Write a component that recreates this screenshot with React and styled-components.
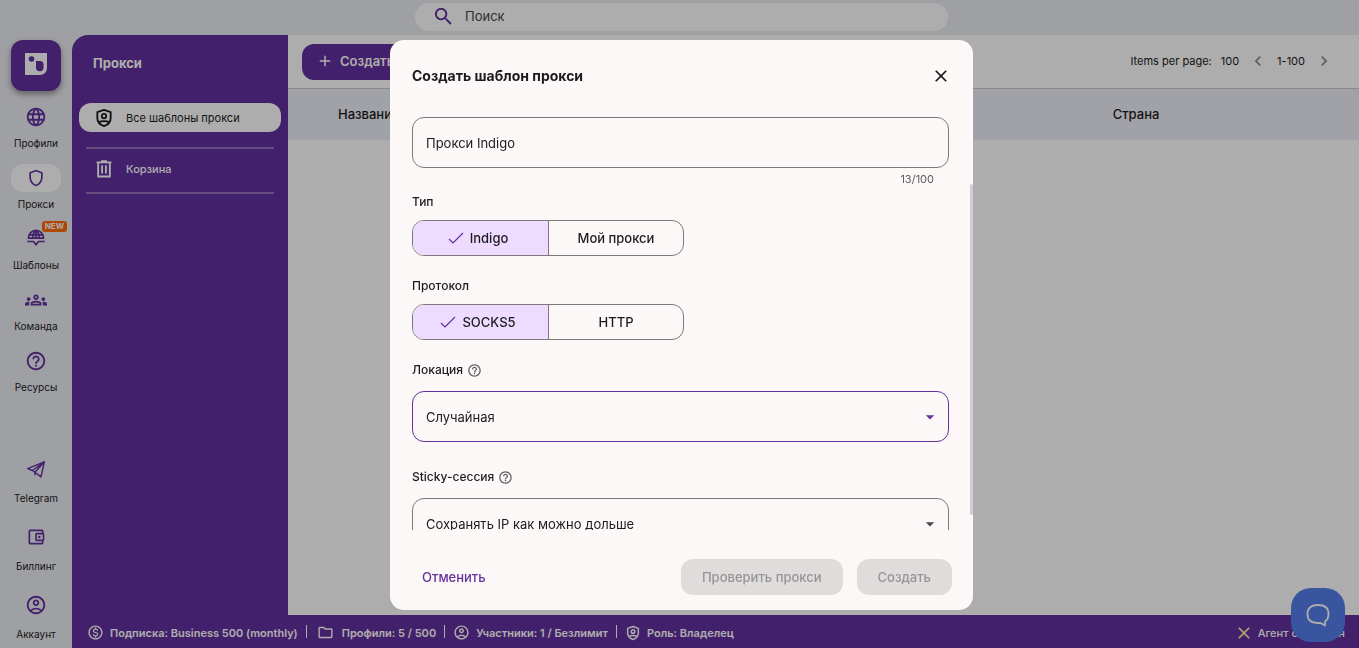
import React, { useState } from 'react';
import styled, { createGlobalStyle, css } from 'styled-components';
import {
  MdAdd,
  MdArrowDropDown,
  MdChevronLeft,
  MdChevronRight,
  MdClose,
  MdHelpOutline,
  MdLanguage,
  MdOutlineAccountBalanceWallet,
  MdOutlineAccountCircle,
  MdOutlineFolder,
  MdOutlineGroups,
  MdOutlineMonetizationOn,
  MdOutlineShield,
  MdSearch,
} from 'react-icons/md';

const purple = '#64309e';

const GlobalStyle = createGlobalStyle`
  * {
    box-sizing: border-box;
  }

  body {
    margin: 0;
    font-family: Inter, "Liberation Sans", sans-serif;
    font-size: 13px;
    color: #1c1b1d;
    background: #ebecf2;
  }

  button, input, select {
    font-family: inherit;
  }
`;

/* icons missing from the material set */

const ShieldPersonIcon = ({ size = 20 }) => (
  <svg width={size} height={size} viewBox="0 0 24 24" fill="none" stroke="currentColor" strokeWidth="2.200">
    <path d="M12 2.200 4 5V12c0 4.600 3.300 8.200 8 9.700 4.700-1.500 8-5.100 8-9.700V5z" strokeLinejoin="round" />
    <circle cx="12" cy="9.700" r="2.700" />
    <path d="M6 17c3-1.600 9-1.600 12 0" />
  </svg>
);

const TrashIcon = ({ size = 20 }) => (
  <svg width={size} height={size} viewBox="0 0 24 24" fill="none" stroke="currentColor" strokeWidth="2.200">
    <path d="M3 4h18M8.500 2.500h7" />
    <path d="M5 4.500v16.500h14V4.500M9.700 7.500v10M14.300 7.500v10" />
  </svg>
);

const UmbrellaGlobeIcon = ({ size = 20 }) => (
  <svg width={size} height={size} viewBox="0 3 24 24" fill="none" stroke="currentColor" strokeWidth="2">
    <path d="M3 14a9 9.500 0 0 1 18 0zM3.500 10h17M8 14c0-4 1.500-7.500 4-9.500 2.500 2 4 5.500 4 9.500M12 4.500V14" />
    <path d="M1.500 18h7.500l3 4 3-4h7.500" strokeLinejoin="round" />
  </svg>
);

const PlaneIcon = ({ size = 20 }) => (
  <svg width={size} height={size} viewBox="0 0 24 24" fill="none" stroke="currentColor" strokeWidth="1.700" strokeLinejoin="round">
    <path d="M22 3.500 2 11.500l5.700 2.300L18 21.500z" />
    <path d="M22 3.500 7.700 13.800M22 3.500 11 15.500l-.5 4" />
  </svg>
);

const CheckIcon = () => (
  <svg width="16" height="14" viewBox="0 0 16 14" fill="none" stroke={purple} strokeWidth="1.200">
    <path d="M1 8l4 4L15 2" />
  </svg>
);

const LogoMark = () => (
  <svg width="22" height="22" viewBox="0 0 22 22">
    <path d="M0 0h22v15a7 7 0 0 1-7 7H0z" fill="#fff" />
    <circle cx="6.500" cy="6" r="2.800" fill={purple} />
    <path d="M11 8h4a3.500 3.500 0 0 1 3.500 3.500v3a3.700 3.700 0 0 1-7.500 0z" fill={purple} />
  </svg>
);

const ChatIcon = () => (
  <svg width="26" height="26" viewBox="0 0 26 26" fill="none" stroke="#fff" strokeWidth="1.800" strokeLinejoin="round">
    <path d="M13 3c7 0 10.500 3 10.500 9 0 3.500-1 6-3.500 7.500v4L15.500 21H13c-7 0-10.500-3-10.500-9S6 3 13 3z" />
  </svg>
);

const Page = styled.div`
  display: grid;
  grid-template-rows: 35px minmax(0, 1fr) 33px;
  grid-template-columns: 72px 216px minmax(0, 1fr);
  height: 100vh;
  background: #ebecf2;
`;

const TopBar = styled.header`
  grid-column: 2 / -1;
  display: flex;
  justify-content: center;
  align-items: center;
  padding-right: 68px;
  padding-bottom: 1px;
`;

const SearchBox = styled.label`
  display: flex;
  align-items: center;
  gap: 8px;
  width: 533px;
  height: 28px;
  padding: 0 17px 2px;
  border-radius: 14px;
  background: #fff;
  color: ${purple};
`;

const SearchInput = styled.input`
  flex: 1;
  border: 0;
  outline: 0;
  background: none;
  font-size: 13px;

  &::placeholder {
    color: #49454e;
    opacity: 1;
  }
`;

const NavRail = styled.nav`
  grid-column: 1;
  grid-row: 1 / -1;
  display: flex;
  flex-direction: column;
  align-items: center;
  padding: 40px 0 6px;
`;

const Logo = styled.a`
  display: flex;
  justify-content: center;
  align-items: center;
  width: 50px;
  height: 51px;
  padding-bottom: 3px;
  margin-bottom: 12px;
  border-radius: 12px;
  background: ${purple};
  box-shadow: 0 3px 6px rgba(0, 0, 0, .4);
`;

const NavGroup = styled.div`
  display: flex;
  flex-direction: column;
  gap: ${props => (props.$bottom ? 17 : 13)}px;
  margin-top: ${props => (props.$bottom ? 'auto' : 0)};
`;

const NavLink = styled.a`
  display: flex;
  flex-direction: column;
  align-items: center;
  gap: ${props => (props.$loose ? 7 : 4)}px;
  color: #1c1b1d;
  font-size: 10px;
  line-height: 16px;
  text-decoration: none;
`;

const NavIcon = styled.span`
  position: relative;
  display: flex;
  justify-content: center;
  align-items: center;
  width: 50px;
  height: 28px;
  border-radius: 12px;
  color: ${purple};
  background: ${props => (props.$active ? '#fff' : 'none')};
`;

const NewBadge = styled.span`
  position: absolute;
  top: -4px;
  right: -6px;
  padding: 0 3px;
  border-radius: 3px;
  background: #ff6a0a;
  color: #fff;
  font-size: 8px;
  font-weight: 700;
  line-height: 11px;
`;

const SidePanel = styled.aside`
  padding: 19px 7px;
  border-top-left-radius: 16px;
  background: ${purple};
  color: #fff;
`;

const SideTitle = styled.h2`
  margin: 0 14px 30px;
  font-size: 13px;
  font-weight: 700;
  line-height: 19px;
`;

const SideLink = styled.a`
  display: flex;
  align-items: center;
  gap: 12px;
  height: 29px;
  padding: 0 15px;
  border-radius: 12px;
  font-size: 11px;
  font-weight: ${props => (props.$active ? 400 : 500)};
  color: ${props => (props.$active ? '#1c1b1d' : '#fff')};
  background: ${props => (props.$active ? '#fff' : 'none')};
  text-decoration: none;
`;

const SideSection = styled.div`
  margin: 15px 7px;
  padding: 5px 0 9px;
  border-top: 2px solid #9573bb;
  border-bottom: 2px solid #9573bb;

  ${SideLink} {
    padding: 0 8px;
  }
`;

const Main = styled.main`
  background: #fff;
`;

const Toolbar = styled.div`
  display: flex;
  align-items: center;
  justify-content: space-between;
  height: 54px;
  padding: 0 25px 0 14px;
  border-bottom: 1px solid #cac9cb;
`;

const CreateButton = styled.button`
  display: flex;
  align-items: center;
  gap: 6px;
  height: 36px;
  padding: 0 22px 2px 14px;
  border: 0;
  border-radius: 12px;
  background: ${purple};
  color: #fff;
  font-size: 13px;
  font-weight: 600;
`;

const Pager = styled.div`
  display: flex;
  align-items: center;
  gap: 9px;
  padding-bottom: 2px;
  font-size: 11px;
`;

const PagerButton = styled.button`
  display: flex;
  padding: 0;
  border: 0;
  background: none;
  color: #8b8a8c;
`;

const Table = styled.table`
  width: 100%;
  border-collapse: collapse;
`;

const HeadCell = styled.th`
  width: ${props => props.$width};
  height: 51px;
  padding: 0 0 2px ${props => props.$indent || 0}px;
  background: #eeeff7;
  font-weight: 500;
  text-align: left;
`;

const StatusBar = styled.footer`
  grid-column: 2 / -1;
  display: flex;
  align-items: center;
  justify-content: space-between;
  padding: 2px 14px 0 15px;
  background: ${purple};
  color: #fff;
  font-size: 11px;
  font-weight: 600;
`;

const StatusItem = styled.span`
  display: flex;
  align-items: center;
  gap: ${props => props.$gap || 6}px;
  white-space: nowrap;
`;

const StatusList = styled.div`
  display: flex;

  ${StatusItem} + ${StatusItem}::before {
    content: '';
    width: 1px;
    height: 13px;
    margin: 0 2px 2px 8px;
    background: #fff;
  }
`;

const Agent = styled.span`
  display: flex;
  align-items: center;
  gap: 4px;
  font-weight: 500;
  white-space: nowrap;

  svg {
    color: #fff2a8;
    stroke: currentColor;
  }
`;

const ChatButton = styled.button`
  position: fixed;
  right: 14px;
  bottom: 6px;
  display: flex;
  justify-content: center;
  align-items: center;
  width: 54px;
  height: 54px;
  border: 0;
  border-radius: 20px;
  background: #557eec;
`;

const Overlay = styled.div`
  position: fixed;
  inset: 0;
  display: flex;
  justify-content: center;
  padding: 40px 0 38px 4px;
  background: rgba(0, 0, 0, .32);
`;

const Dialog = styled.form`
  position: relative;
  display: flex;
  flex-direction: column;
  width: 583px;
  max-width: 100%;
  border-radius: 14px;
  background: #fcf8f7;
  overflow: hidden;
`;

const DialogHeader = styled.div`
  display: flex;
  align-items: center;
  justify-content: space-between;
  padding: 25px 22px 0;
`;

const DialogTitle = styled.h1`
  margin: 0;
  font-size: 14px;
  font-weight: 700;
  line-height: 22px;
`;

const CloseButton = styled.button`
  display: flex;
  padding: 0;
  border: 0;
  background: none;
  color: #1c1b1d;
`;

const DialogBody = styled.div`
  flex: 1;
  min-height: 0;
  margin-top: 30px;
  padding: 0 24px 30px 22px;
  overflow-y: auto;
  scrollbar-width: none;
`;

const ScrollThumb = styled.span`
  position: absolute;
  top: 144px;
  right: 0;
  bottom: 95px;
  width: 3px;
  border-radius: 2px;
  background: #cfccd6;
`;

const fieldBox = css`
  display: block;
  width: 100%;
  height: 51px;
  padding: 0 13px;
  border: 1px solid ${props => (props.$active ? purple : '#7d787a')};
  border-radius: 12px;
  outline: 0;
  background: none;
  color: #1c1b1d;
  font-size: 13px;
`;

const TextField = styled.input`
  ${fieldBox}
`;

const Counter = styled.div`
  margin-bottom: 4px;
  padding: 2px 15px 0 0;
  color: #5f5b5e;
  font-size: 11px;
  line-height: 18px;
  text-align: right;
`;

const FieldLabel = styled.label`
  display: flex;
  align-items: center;
  gap: 4px;
  margin-bottom: 11px;
  font-size: 12px;
  font-weight: 500;
  line-height: 20px;

  svg {
    color: #5f5b5e;
  }
`;

const SelectWrap = styled.div`
  position: relative;
  margin-bottom: 25px;
  color: ${props => (props.$active ? purple : '#49454e')};

  svg {
    position: absolute;
    top: 16px;
    right: 9px;
    pointer-events: none;
  }
`;

const Select = styled.select`
  ${fieldBox}
  appearance: none;
`;

const Fieldset = styled.fieldset`
  margin: 0 0 20px;
  padding: 0;
  border: 0;
`;

const Legend = styled.legend`
  padding: 0;
  margin-bottom: 8px;
  font-size: 12px;
  font-weight: 500;
  line-height: 20px;
`;

const Segments = styled.div`
  display: grid;
  grid-template-columns: 1fr 1fr;
  width: 272px;
  height: 36px;
  border: 1px solid #7d787a;
  border-radius: 12px;
  overflow: hidden;
`;

const Segment = styled.label`
  display: flex;
  justify-content: center;
  align-items: center;
  gap: 6px;
  padding-right: ${props => (props.$checked ? 5 : 0)}px;
  font-weight: 500;
  background: ${props => (props.$checked ? '#eddcff' : 'none')};

  &:last-child {
    border-left: 1px solid #7d787a;
  }

  input {
    position: absolute;
    opacity: 0;
    pointer-events: none;
  }
`;

const DialogFooter = styled.div`
  display: flex;
  align-items: center;
  gap: 14px;
  padding: 29px 21px 15px;
`;

const Button = styled.button`
  height: 36px;
  padding: 0 21px;
  border: 0;
  border-radius: 12px;
  background: #dedddb;
  color: #979495;
  font-size: 13px;
  font-weight: 500;
`;

const CancelButton = styled(Button)`
  margin-right: auto;
  padding: 0 11px;
  background: none;
  color: ${purple};
`;

const mainNav = [
  { label: 'Профили', icon: MdLanguage, size: 22 },
  { label: 'Прокси', icon: MdOutlineShield, active: true },
  { label: 'Шаблоны', icon: UmbrellaGlobeIcon, badge: 'NEW' },
  { label: 'Команда', icon: MdOutlineGroups, size: 22 },
  { label: 'Ресурсы', icon: MdHelpOutline, size: 22 },
];

const bottomNav = [
  { label: 'Telegram', icon: PlaneIcon },
  { label: 'Биллинг', icon: MdOutlineAccountBalanceWallet },
  { label: 'Аккаунт', icon: MdOutlineAccountCircle, size: 22 },
];

const NavItem = ({ label, icon: Icon, size = 20, active, badge, loose }) => (
  <NavLink href="#" $loose={loose}>
    <NavIcon $active={active}>
      <Icon size={size} />
      {badge && <NewBadge>{badge}</NewBadge>}
    </NavIcon>
    {label}
  </NavLink>
);

const SegmentedField = ({ legend, name, options }) => {
  const [value, setValue] = useState(options[0]);

  return (
    <Fieldset>
      <Legend>{legend}</Legend>
      <Segments>
        {options.map(e => (
          <Segment key={e} $checked={value === e}>
            <input type="radio" name={name} checked={value === e} onChange={() => setValue(e)} />
            {value === e && <CheckIcon />}
            {e}
          </Segment>
        ))}
      </Segments>
    </Fieldset>
  );
};

const SelectField = ({ id, label, value, active }) => (
  <>
    <FieldLabel htmlFor={id}>
      {label}
      <MdHelpOutline size={15} />
    </FieldLabel>
    <SelectWrap $active={active}>
      <Select id={id} $active={active} defaultValue={value}>
        <option>{value}</option>
      </Select>
      <MdArrowDropDown size={20} />
    </SelectWrap>
  </>
);

const ProxyDialog = () => {
  const [name, setName] = useState('Прокси Indigo');

  return (
    <Overlay>
      <Dialog role="dialog" aria-labelledby="dialog-title" onSubmit={e => e.preventDefault()}>
        <DialogHeader>
          <DialogTitle id="dialog-title">Создать шаблон прокси</DialogTitle>
          <CloseButton type="button" aria-label="Закрыть">
            <MdClose size={20} />
          </CloseButton>
        </DialogHeader>
        <DialogBody>
          <TextField
            aria-label="Название"
            maxLength={100}
            value={name}
            onChange={e => setName(e.target.value)}
          />
          <Counter>{name.length}/100</Counter>
          <SegmentedField legend="Тип" name="type" options={['Indigo', 'Мой прокси']} />
          <SegmentedField legend="Протокол" name="protocol" options={['SOCKS5', 'HTTP']} />
          <SelectField id="location" label="Локация" value="Случайная" active />
          <SelectField id="session" label="Sticky-сессия" value="Сохранять IP как можно дольше" />
        </DialogBody>
        <DialogFooter>
          <CancelButton type="button">Отменить</CancelButton>
          <Button type="button" disabled>Проверить прокси</Button>
          <Button type="submit" disabled>Создать</Button>
        </DialogFooter>
        <ScrollThumb />
      </Dialog>
    </Overlay>
  );
};

export default function App() {
  return (
    <>
      <GlobalStyle />
      <Page>
        <NavRail>
          <Logo href="#" aria-label="Indigo"><LogoMark /></Logo>
          <NavGroup>
            {mainNav.map(e => <NavItem key={e.label} {...e} />)}
          </NavGroup>
          <NavGroup $bottom>
            {bottomNav.map(e => <NavItem key={e.label} loose {...e} />)}
          </NavGroup>
        </NavRail>
        <TopBar>
          <SearchBox>
            <MdSearch size={23} />
            <SearchInput type="search" placeholder="Поиск" aria-label="Поиск" />
          </SearchBox>
        </TopBar>
        <SidePanel>
          <SideTitle>Прокси</SideTitle>
          <SideLink href="#" $active>
            <ShieldPersonIcon />
            Все шаблоны прокси
          </SideLink>
          <SideSection>
            <SideLink href="#">
              <TrashIcon />
              Корзина
            </SideLink>
          </SideSection>
        </SidePanel>
        <Main>
          <Toolbar>
            <CreateButton>
              <MdAdd size={18} />
              Создать прокси
            </CreateButton>
            <Pager>
              <span>Items per page:</span>
              <span>100</span>
              <PagerButton aria-label="Назад"><MdChevronLeft size={20} /></PagerButton>
              <span>1-100</span>
              <PagerButton aria-label="Вперёд"><MdChevronRight size={20} /></PagerButton>
            </Pager>
          </Toolbar>
          <Table>
            <thead>
              <tr>
                <HeadCell $width="77%" $indent={50}>Название</HeadCell>
                <HeadCell>Страна</HeadCell>
              </tr>
            </thead>
          </Table>
        </Main>
        <StatusBar>
          <StatusList>
            <StatusItem>
              <MdOutlineMonetizationOn size={17} />
              Подписка: Business 500 (monthly)
            </StatusItem>
            <StatusItem $gap={8}>
              <MdOutlineFolder size={17} />
              Профили: 5 / 500
            </StatusItem>
            <StatusItem>
              <MdOutlineAccountCircle size={17} />
              Участники: 1 / Безлимит
            </StatusItem>
            <StatusItem>
              <ShieldPersonIcon size={16} />
              Роль: Владелец
            </StatusItem>
          </StatusList>
          <Agent>
            <MdClose size={20} />
            Агент отключен
          </Agent>
        </StatusBar>
      </Page>
      <ChatButton aria-label="Чат"><ChatIcon /></ChatButton>
      <ProxyDialog />
    </>
  );
}
